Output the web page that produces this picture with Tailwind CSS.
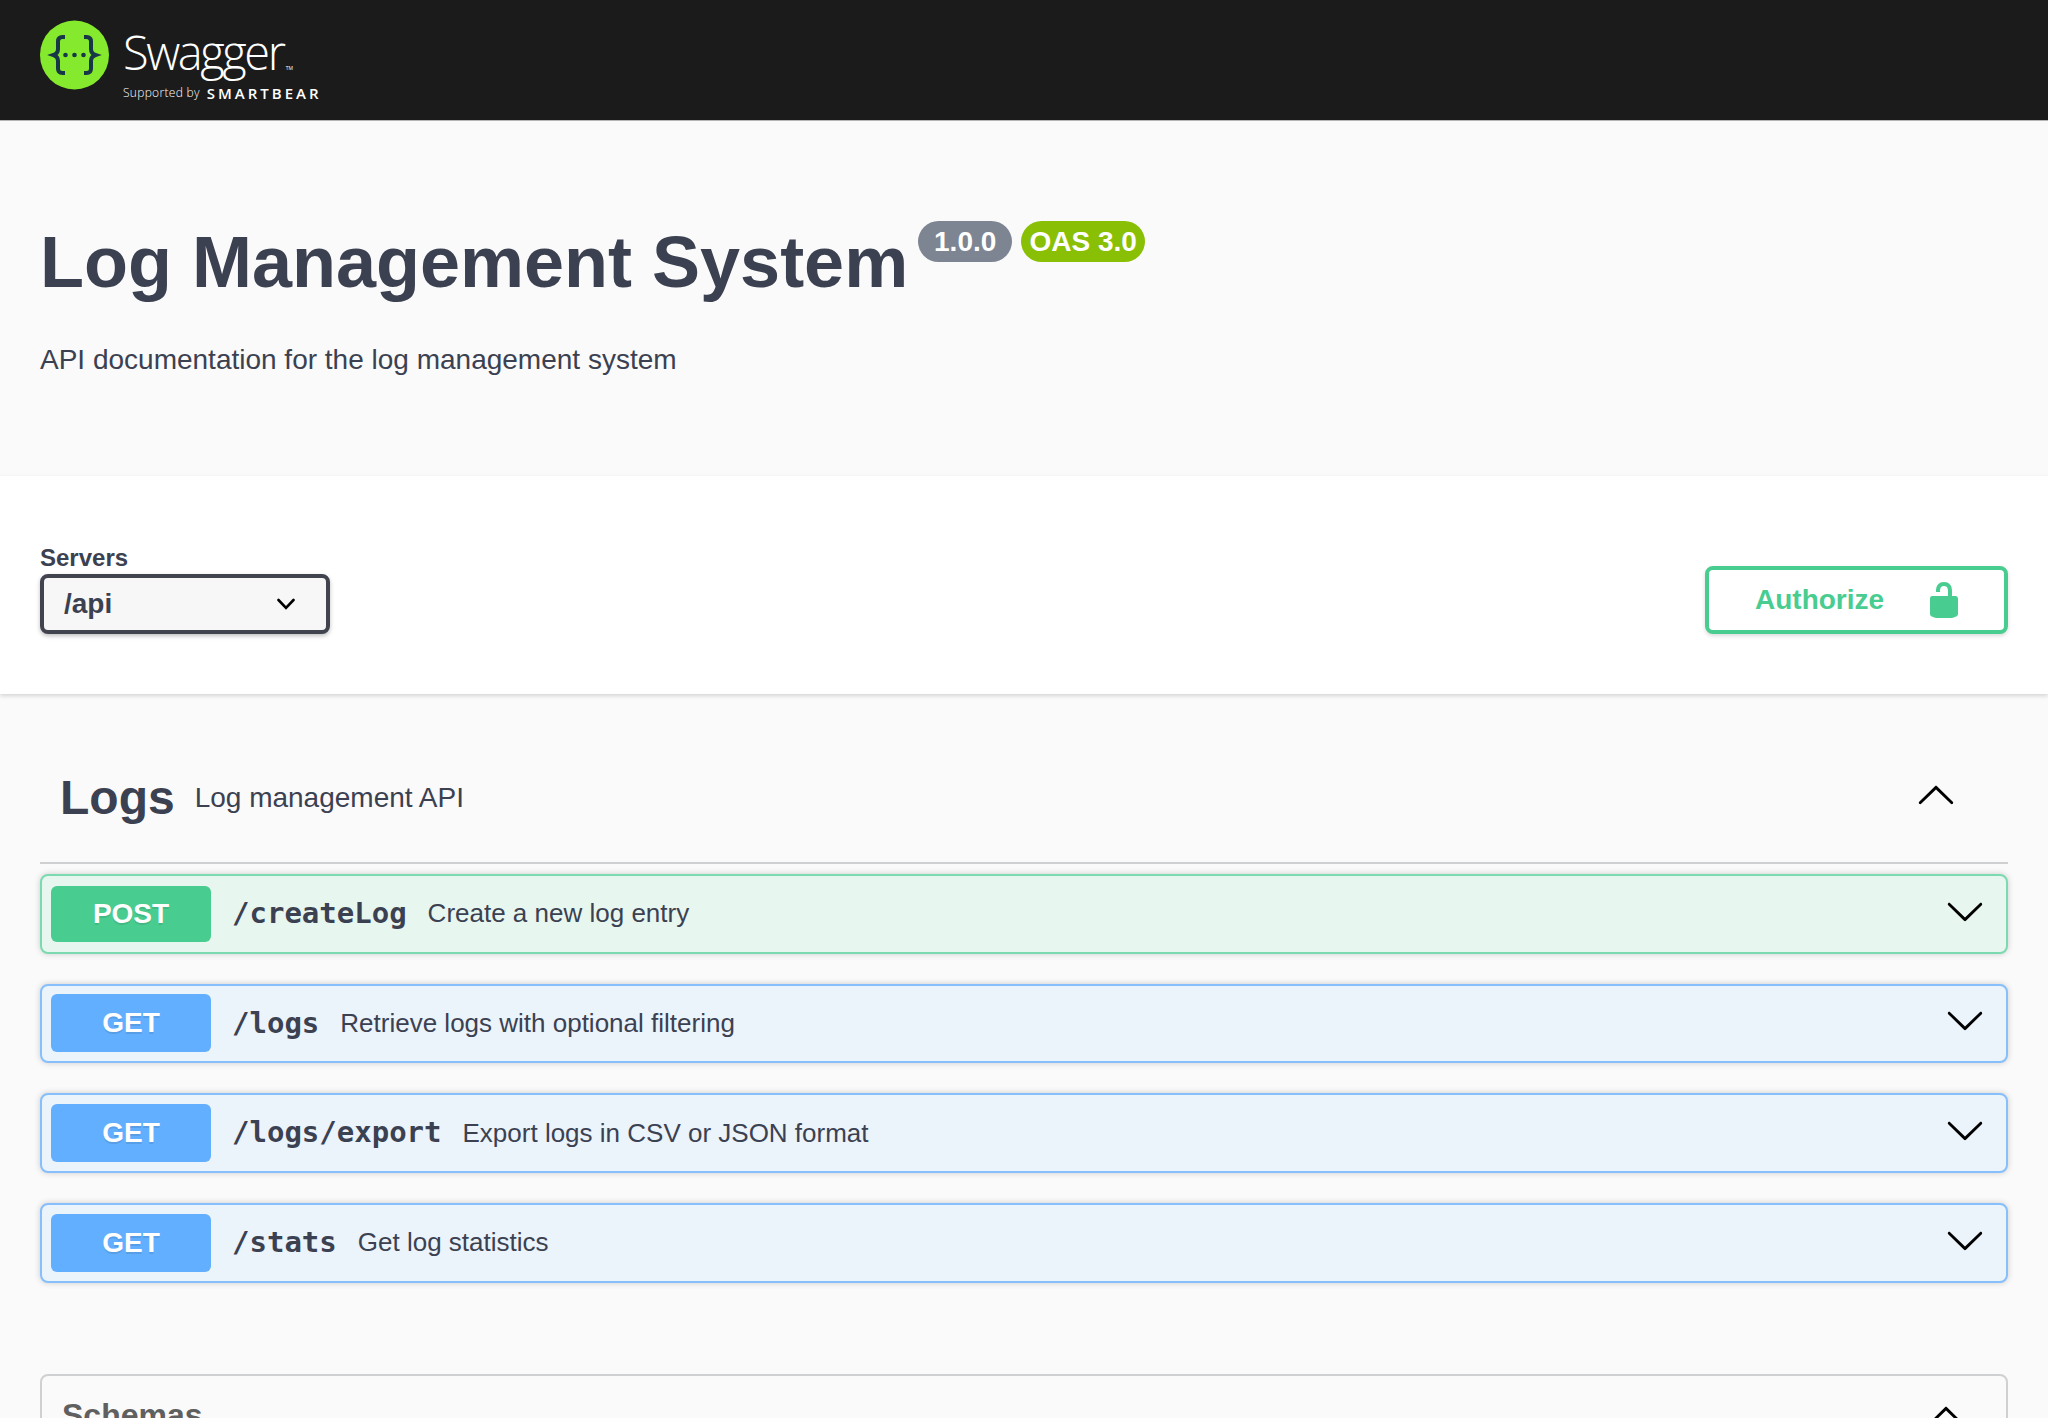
<!DOCTYPE html>
<html lang="en">
<head>
<meta charset="utf-8">
<title>Swagger UI</title>
<script src="https://cdn.jsdelivr.net/npm/@tailwindcss/browser@4"></script>
</head>
<body class="bg-[#fafafa] font-['Liberation_Sans',sans-serif] text-[#3b4151]">
<div class="h-[1418px] overflow-hidden">
<header class="flex h-[121px] items-start border-b border-[#b5b5b5] bg-[#1b1b1b] pl-[40px] pt-[20px]">
  <svg class="h-[70px] w-[70px] shrink-0" viewBox="0 0 70 70" aria-hidden="true">
    <circle cx="34.5" cy="35" r="34.5" fill="#85ea2d"/>
    <path d="M25 17h-2.500c-3 0-4.500 1.600-4.500 4.500v7.500c0 3-1.500 5-4.500 6 3 1 4.500 3 4.500 6v7.500c0 2.900 1.500 4.500 4.500 4.500H25M44 17h2.500c3 0 4.500 1.600 4.500 4.500v7.500c0 3 1.500 5 4.500 6-3 1-4.500 3-4.500 6v7.500c0 2.900-1.500 4.500-4.500 4.500H44" fill="none" stroke="#173646" stroke-width="4"/>
    <circle cx="25.500" cy="35" r="2.300" fill="#173646"/><circle cx="34.500" cy="35" r="2.300" fill="#173646"/><circle cx="43.500" cy="35" r="2.300" fill="#173646"/>
  </svg>
  <div class="mt-[4px] ml-[13px] flex flex-col text-white">
    <div class="flex items-start font-['Open_Sans',sans-serif]">
      <span class="text-[47px] leading-[56px] font-[350] tracking-[-2.400px]">Swagger</span>
      <span class="mt-[42px] ml-[2px] text-[5px] leading-none">TM</span>
    </div>
    <div class="mt-[5px] flex items-center gap-[7px] whitespace-nowrap font-['Open_Sans',sans-serif]">
      <span class="text-[12px] leading-[16px] font-light tracking-[0.300px]">Supported by</span>
      <span class="text-[15px] leading-[16px] font-semibold tracking-[3px]">SMARTBEAR</span>
    </div>
  </div>
</header>

<section class="h-[355px] bg-[#fafafa] px-[40px] pt-[100px]">
  <div class="flex items-start">
    <h1 class="mt-[-6px] pt-[17px] text-[72px] leading-[60px] font-bold tracking-normal">Log Management System</h1>
    <span class="ml-[10px] flex h-[41px] w-[94px] items-center justify-center rounded-full bg-[#7d8492] text-[28px] font-bold text-white">1.0.0</span>
    <span class="ml-[9px] flex h-[41px] w-[124px] items-center justify-center rounded-full bg-[#89bf04] text-[28px] font-bold text-white">OAS 3.0</span>
  </div>
  <p class="mt-[48px] text-[28px] leading-[40px]">API documentation for the log management system</p>
</section>

<section class="flex h-[218px] items-end justify-between bg-white px-[40px] pb-[60px] shadow-[0_2px_4px_0_rgba(0,0,0,0.15)]">
  <div>
    <div class="text-[24px] leading-[28px] font-bold">Servers</div>
    <div class="mt-[2px] flex h-[60px] w-[290px] items-center justify-between rounded-[8px] border-4 border-[#41444e] bg-[#f7f7f7] pr-[31px] pl-[20px] shadow-[0_2px_4px_0_rgba(0,0,0,0.25)]">
      <span class="text-[28px] font-bold">/api</span>
      <svg class="h-[18px] w-[18px]" viewBox="0 0 18 12" aria-hidden="true"><path d="M1.500 2 9 9.800 16.500 2" fill="none" stroke="#000" stroke-width="2.600" stroke-linecap="round"/></svg>
    </div>
  </div>
  <button class="flex h-[68px] w-[303px] items-center rounded-[8px] border-4 border-[#49cc90] bg-white pl-[46px] text-[28px] font-bold text-[#49cc90] shadow-[0_2px_4px_0_rgba(0,0,0,0.15)]">
    <span>Authorize</span>
    <svg class="ml-[40px] h-[40px] w-[40px] fill-[#49cc90]" viewBox="0 0 20 20" aria-hidden="true"><path d="M15.800 8H14V5.600C14 2.703 12.665 1 10 1 7.334 1 6 2.703 6 5.600V6h2v-.801C8 3.754 8.797 3 10 3c1.203 0 2 .754 2 2.199V8H4c-.553 0-1 .646-1 1.199V17c0 .549.428 1.139.951 1.307l1.197.387C5.672 18.861 6.550 19 7.100 19h5.800c.549 0 1.428-.139 1.951-.307l1.196-.387c.524-.167.953-.757.953-1.306V9.199C17 8.646 16.352 8 15.800 8z"/></svg>
  </button>
</section>

<main class="px-[40px]">
  <div class="flex h-[170px] items-center border-b-2 border-[#cfd0d2] pt-[40px] pr-[52px] pl-[20px]">
    <h3 class="text-[48px] leading-none font-bold">Logs</h3>
    <span class="ml-[20px] text-[28px]">Log management API</span>
    <svg class="mt-[-4px] ml-auto h-[40px] w-[40px]" viewBox="0 0 20 20" aria-hidden="true"><path transform="rotate(180 10 10)" d="M17.418 6.109c.272-.268.709-.268.979 0s.271.701 0 .969l-7.908 7.830c-.270.268-.707.268-.979 0l-7.908-7.830c-.270-.268-.270-.701 0-.969.271-.268.709-.268.979 0L10 13.250l7.418-7.141z"/></svg>
  </div>

  <div class="mt-[10px] flex h-[79.67px] items-center rounded-[8px] border-2 border-[#7bdaaf] bg-[#e8f6f0] pr-[21px] pl-[9px] shadow-[0_0_6px_rgba(0,0,0,0.19)]">
    <span class="flex h-[56px] w-[160px] shrink-0 items-center justify-center rounded-[6px] bg-[#49cc90] text-[28px] font-bold text-white [text-shadow:0_2px_0_rgb(0_0_0/0.1)]">POST</span>
    <span class="ml-[21px] font-['DejaVu_Sans_Mono',monospace] text-[29px] font-bold">/createLog</span>
    <span class="ml-[21px] text-[26px]">Create a new log entry</span>
    <svg class="mt-[-6px] ml-auto h-[40px] w-[40px]" viewBox="0 0 20 20" aria-hidden="true"><path d="M17.418 6.109c.272-.268.709-.268.979 0s.271.701 0 .969l-7.908 7.830c-.270.268-.707.268-.979 0l-7.908-7.830c-.270-.268-.270-.701 0-.969.271-.268.709-.268.979 0L10 13.250l7.418-7.141z"/></svg>
  </div>

  <div class="mt-[30px] flex h-[79.67px] items-center rounded-[8px] border-2 border-[#86bffc] bg-[#ebf3fb] pr-[21px] pl-[9px] shadow-[0_0_6px_rgba(0,0,0,0.19)]">
    <span class="flex h-[58px] w-[160px] shrink-0 items-center justify-center rounded-[6px] bg-[#61affe] text-[28px] font-bold text-white [text-shadow:0_2px_0_rgb(0_0_0/0.1)]">GET</span>
    <span class="ml-[21px] font-['DejaVu_Sans_Mono',monospace] text-[29px] font-bold">/logs</span>
    <span class="ml-[21px] text-[26px]">Retrieve logs with optional filtering</span>
    <svg class="mt-[-6px] ml-auto h-[40px] w-[40px]" viewBox="0 0 20 20" aria-hidden="true"><path d="M17.418 6.109c.272-.268.709-.268.979 0s.271.701 0 .969l-7.908 7.830c-.270.268-.707.268-.979 0l-7.908-7.830c-.270-.268-.270-.701 0-.969.271-.268.709-.268.979 0L10 13.250l7.418-7.141z"/></svg>
  </div>

  <div class="mt-[30px] flex h-[79.67px] items-center rounded-[8px] border-2 border-[#86bffc] bg-[#ebf3fb] pr-[21px] pl-[9px] shadow-[0_0_6px_rgba(0,0,0,0.19)]">
    <span class="flex h-[58px] w-[160px] shrink-0 items-center justify-center rounded-[6px] bg-[#61affe] text-[28px] font-bold text-white [text-shadow:0_2px_0_rgb(0_0_0/0.1)]">GET</span>
    <span class="ml-[21px] font-['DejaVu_Sans_Mono',monospace] text-[29px] font-bold">/logs/export</span>
    <span class="ml-[21px] text-[26px]">Export logs in CSV or JSON format</span>
    <svg class="mt-[-6px] ml-auto h-[40px] w-[40px]" viewBox="0 0 20 20" aria-hidden="true"><path d="M17.418 6.109c.272-.268.709-.268.979 0s.271.701 0 .969l-7.908 7.830c-.270.268-.707.268-.979 0l-7.908-7.830c-.270-.268-.270-.701 0-.969.271-.268.709-.268.979 0L10 13.250l7.418-7.141z"/></svg>
  </div>

  <div class="mt-[30px] flex h-[79.67px] items-center rounded-[8px] border-2 border-[#86bffc] bg-[#ebf3fb] pr-[21px] pl-[9px] shadow-[0_0_6px_rgba(0,0,0,0.19)]">
    <span class="flex h-[58px] w-[160px] shrink-0 items-center justify-center rounded-[6px] bg-[#61affe] text-[28px] font-bold text-white [text-shadow:0_2px_0_rgb(0_0_0/0.1)]">GET</span>
    <span class="ml-[21px] font-['DejaVu_Sans_Mono',monospace] text-[29px] font-bold">/stats</span>
    <span class="ml-[21px] text-[26px]">Get log statistics</span>
    <svg class="mt-[-6px] ml-auto h-[40px] w-[40px]" viewBox="0 0 20 20" aria-hidden="true"><path d="M17.418 6.109c.272-.268.709-.268.979 0s.271.701 0 .969l-7.908 7.830c-.270.268-.707.268-.979 0l-7.908-7.830c-.270-.268-.270-.701 0-.969.271-.268.709-.268.979 0L10 13.250l7.418-7.141z"/></svg>
  </div>

  <div class="mt-[91px] flex h-[200px] items-start justify-between rounded-[8px] border-2 border-[#cfd0d2] pt-[21px] pr-[40px] pl-[20px]">
    <span class="mt-[-2px] text-[32px] leading-[40px] font-bold text-[#606060]">Schemas</span>
    <svg class="h-[40px] w-[40px]" viewBox="0 0 20 20" aria-hidden="true"><path transform="rotate(180 10 10)" d="M17.418 6.109c.272-.268.709-.268.979 0s.271.701 0 .969l-7.908 7.830c-.270.268-.707.268-.979 0l-7.908-7.830c-.270-.268-.270-.701 0-.969.271-.268.709-.268.979 0L10 13.250l7.418-7.141z"/></svg>
  </div>
</main>
</div>
</body>
</html>
